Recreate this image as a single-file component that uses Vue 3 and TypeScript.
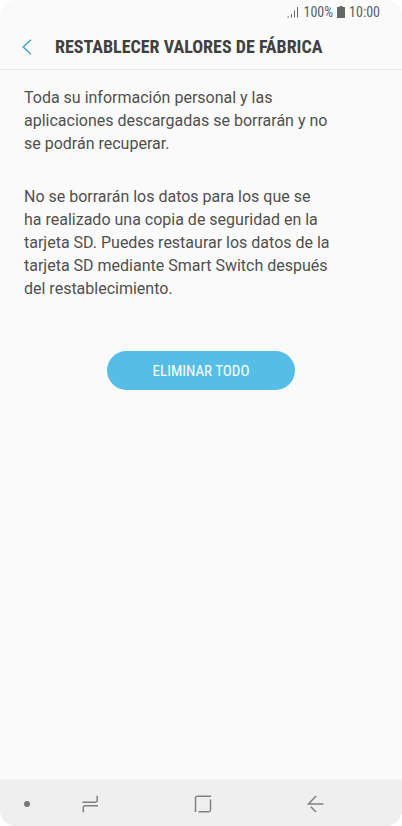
<script setup lang="ts">
const paragraphs: string[] = [
  'Toda su información personal y las aplicaciones descargadas se borrarán y no se podrán recuperar.',
  'No se borrarán los datos para los que se ha realizado una copia de seguridad en la tarjeta SD. Puedes restaurar los datos de la tarjeta SD mediante Smart Switch después del restablecimiento.',
]
</script>

<template>
  <div class="screen">
    <div class="status">
      <svg class="signal" width="12" height="12" viewBox="0 0 12 12" aria-hidden="true">
        <path d="M0.500 11h1.500M4.500 11.500V8M7.500 11.500V4.500M10.500 11.500V1" />
      </svg>
      <span>100%</span>
      <svg class="battery" width="8" height="12" viewBox="0 0 8 12" aria-hidden="true">
        <path d="M2.500 0h3v1H7.500q.5 0 .5.5V11.500q0 .5-.5.5H.5q-.5 0-.5-.5V1.500q0-.5.5-.5h2z" />
      </svg>
      <span>10:00</span>
    </div>
    <header class="header">
      <button class="back" type="button" aria-label="Atrás">
        <svg width="10" height="16" viewBox="0 0 10 16" aria-hidden="true"><path d="M9 .700L1.200 8L9 15.300" /></svg>
      </button>
      <h1>RESTABLECER VALORES DE FÁBRICA</h1>
    </header>
    <main class="content">
      <p v-for="text in paragraphs" :key="text">{{ text }}</p>
      <button class="erase" type="button">ELIMINAR TODO</button>
    </main>
    <nav class="nav">
      <button class="pin" type="button" aria-label="Ocultar barra">
        <svg width="8" height="8" viewBox="0 0 8 8" aria-hidden="true"><circle cx="4" cy="4" r="3" /></svg>
      </button>
      <button type="button" aria-label="Recientes">
        <svg width="18" height="18" viewBox="0 0 18 18" aria-hidden="true">
          <path d="M1.500 7.200H14.500q1.700 0 1.700-1.700V.700M17 10.800H4q-1.700 0-1.700 1.700V17.300" />
        </svg>
      </button>
      <button type="button" aria-label="Inicio">
        <svg width="18" height="18" viewBox="0 0 18 18" aria-hidden="true">
          <path d="M1.500 17V3q0-1.700 1.700-1.700H17M16.500 4.500V15q0 1.700-1.700 1.700H4.500" />
        </svg>
      </button>
      <button type="button" aria-label="Volver">
        <svg width="18" height="18" viewBox="0 0 18 18" aria-hidden="true">
          <path d="M9 1L1.500 9H16.500M3.800 11.800L9 17" />
        </svg>
      </button>
    </nav>
  </div>
</template>

<style>
body { margin: 0; background: #fff; }
</style>

<style scoped>
.screen {
  display: flex;
  flex-direction: column;
  min-height: 100vh;
  overflow: hidden;
  border-radius: 16px;
  background: #fafafa;
  font-family: Roboto, sans-serif;
  color: #505050;
}
button { border: 0; padding: 0; background: none; }
svg { display: block; fill: none; }
.status {
  display: flex;
  justify-content: flex-end;
  align-items: center;
  gap: 4px;
  height: 24px;
  padding-right: 22px;
  font-family: "Roboto Condensed", Roboto, sans-serif;
  font-size: 14px;
  color: #606060;
}
.signal { stroke: #666; }
.battery { fill: #666; }
.header {
  display: flex;
  align-items: center;
  gap: 23px;
  height: 45px;
  padding-left: 22px;
  border-bottom: 1px solid #e8e8e8;
}
.back svg { stroke: #4aa3cb; stroke-width: 1.5; }
h1 {
  margin: 0;
  font-family: "Roboto Condensed", Roboto, sans-serif;
  font-size: 18px;
  line-height: 24px;
  color: #404040;
}
.content {
  flex: 1;
  display: flex;
  flex-direction: column;
  padding: 16px 24px;
}
p {
  max-width: 306px;
  margin: 0 0 30px;
  font-size: 16px;
  line-height: 23px;
}
.erase {
  align-self: center;
  width: 188px;
  height: 39px;
  margin-top: 21px;
  border-radius: 20px;
  background: #56bee6;
  color: #fff;
  font-family: "Roboto Condensed", Roboto, sans-serif;
  font-size: 15px;
}
.nav {
  display: grid;
  grid-template-columns: 34px repeat(3, 1fr);
  box-sizing: border-box;
  height: 47px;
  padding: 2px 30px 0 0;
  background: #efefef;
}
.nav button { display: flex; align-items: center; justify-content: center; }
.nav .pin { justify-content: flex-end; padding-right: 3px; }
.nav svg { stroke: #808080; stroke-width: 1.5; }
.nav .pin svg { fill: #777; stroke: none; }
</style>
